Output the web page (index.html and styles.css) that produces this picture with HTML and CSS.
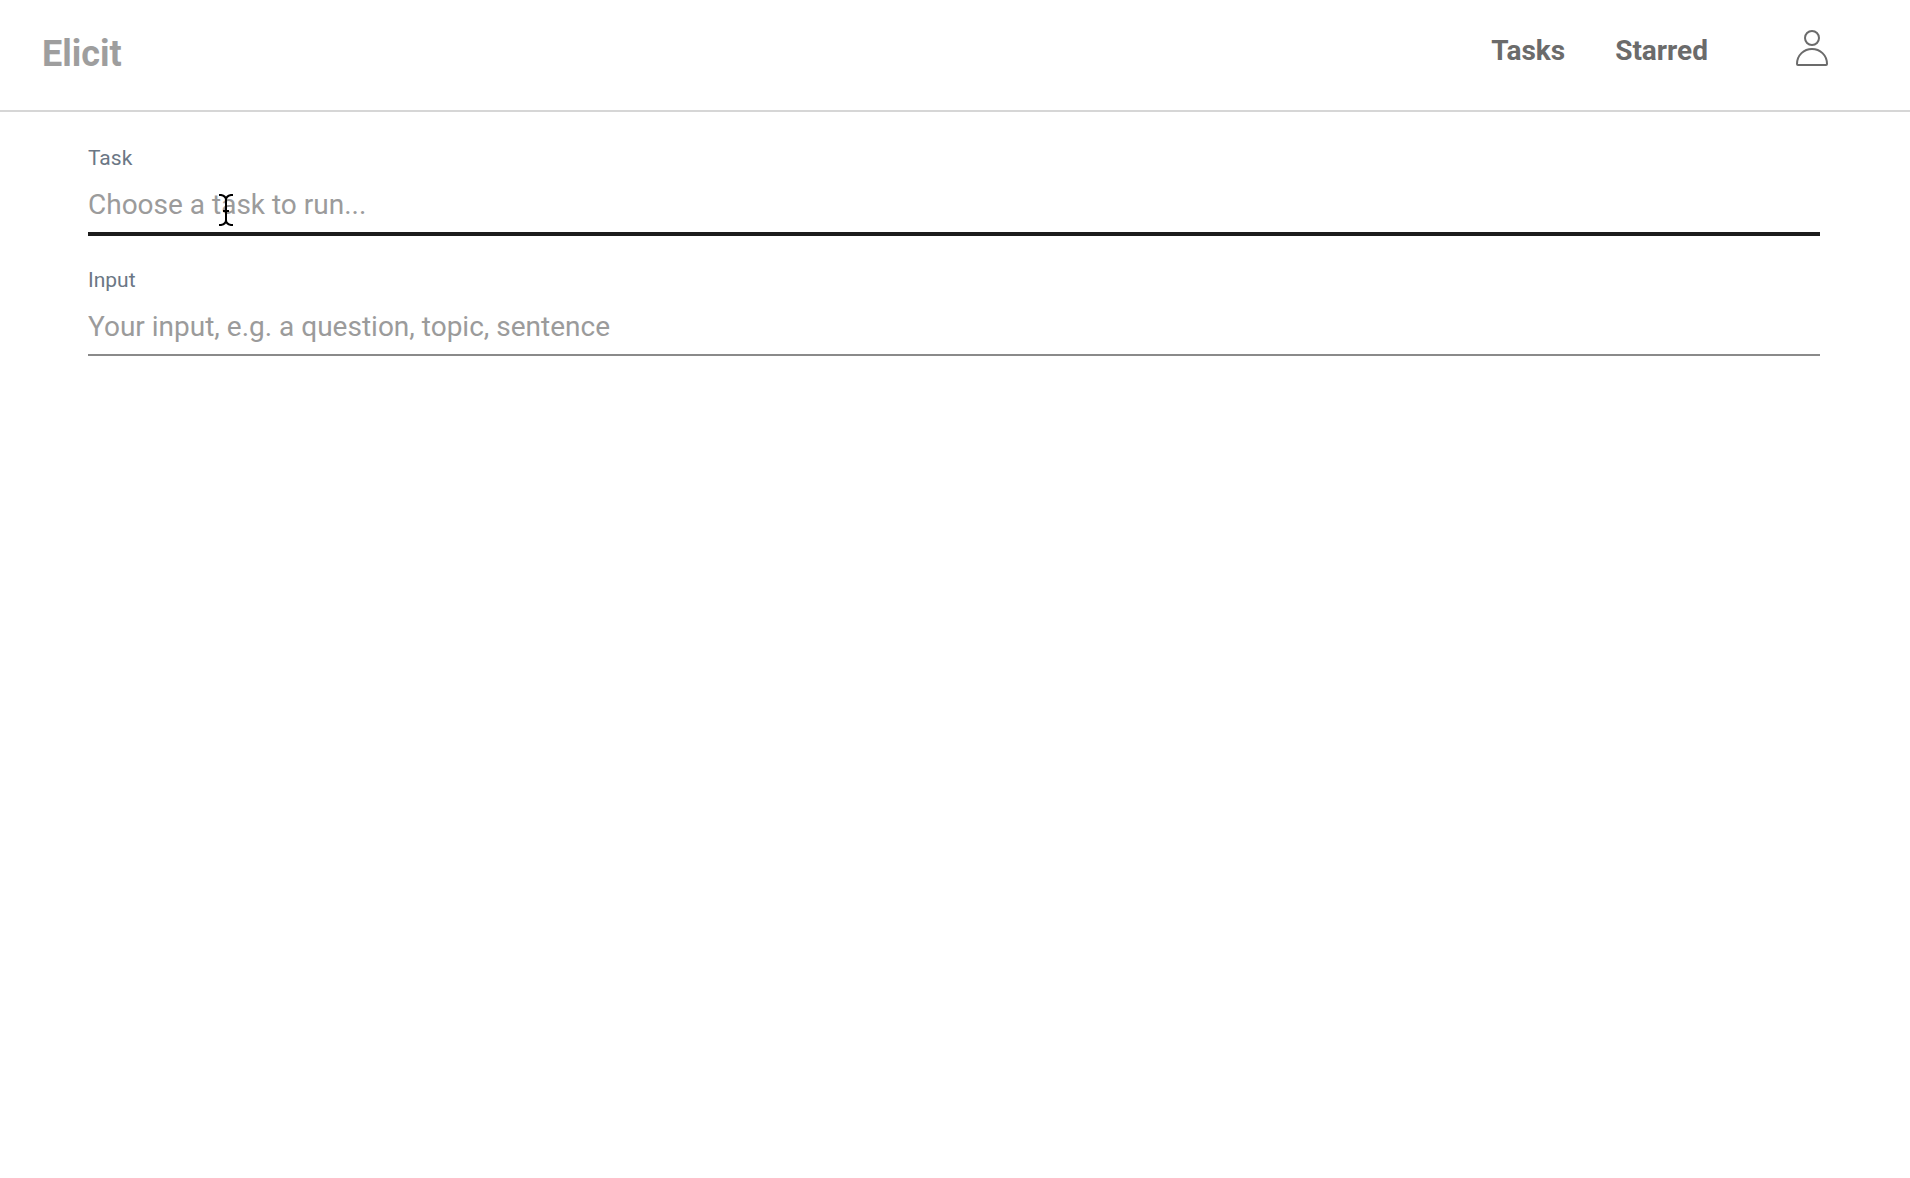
FILE: index.html
```html
<!DOCTYPE html>
<html lang="en">
<head>
<meta charset="utf-8">
<meta name="viewport" content="width=device-width, initial-scale=1">
<title>Elicit</title>
<link rel="stylesheet" href="styles.css">
</head>
<body>
<header class="header">
  <a class="brand" href="#">Elicit</a>
  <nav class="nav">
    <a class="nav-link" href="#tasks">Tasks</a>
    <a class="nav-link" href="#starred">Starred</a>
    <button class="account" type="button" aria-label="Account">
      <svg class="account-icon" viewBox="0 0 32 36" fill="none" stroke="currentColor" stroke-width="2" aria-hidden="true">
        <circle cx="16" cy="8" r="7"/>
        <path d="M2 35Q1 35 1 34C1 25 8 19 16 19S31 25 31 34Q31 35 30 35Z"/>
      </svg>
    </button>
  </nav>
</header>
<main>
  <form class="form">
    <div class="field">
      <label class="label" for="task">Task</label>
      <input class="input input-active" id="task" type="text" placeholder="Choose a task to run..." autocomplete="off">
      <svg class="cursor" viewBox="0 0 14 32" fill="none" stroke="#000" stroke-width="2" aria-hidden="true">
        <path d="M0 1H2Q7 2 7 6V26Q7 30 2 31H0M14 1H12Q7 2 7 6M7 26Q7 30 12 31H14M4 17H10"/>
      </svg>
    </div>
    <div class="field">
      <label class="label" for="input">Input</label>
      <input class="input" id="input" type="text" placeholder="Your input, e.g. a question, topic, sentence" autocomplete="off">
    </div>
  </form>
</main>
</body>
</html>
```
FILE: styles.css
```css
*, *::before, *::after {
  box-sizing: border-box;
}

body {
  margin: 0;
  background: #fff;
  font-family: Roboto, sans-serif;
}

.header {
  display: flex;
  justify-content: space-between;
  align-items: flex-start;
  padding: 30px 82px 32px 42px;
  border-bottom: 2px solid #d6d6d6;
}

.brand {
  color: #9e9e9e;
  font-size: 36px;
  font-weight: 700;
  line-height: 48px;
  text-decoration: none;
}

.nav {
  display: flex;
  align-items: flex-start;
  gap: 50px;
}

.nav-link {
  color: #6b6b6b;
  font-size: 28px;
  font-weight: 700;
  line-height: 42px;
  text-decoration: none;
}

.account {
  display: flex;
  margin-left: 38px;
  padding: 0;
  border: 0;
  background: none;
  color: #6b6b6b;
}

.account-icon {
  width: 32px;
  height: 36px;
}

.form {
  display: flex;
  flex-direction: column;
  gap: 32px;
  padding: 32px 90px 32px 88px;
}

.field {
  position: relative;
  display: flex;
  flex-direction: column;
}

.label {
  color: #6b7785;
  font-size: 21px;
  line-height: 28px;
}

.input {
  width: 100%;
  height: 62px;
  padding: 4px 0 0;
  border: 0;
  border-bottom: 2px solid #8a8a8a;
  border-radius: 0;
  outline: 0;
  background: none;
  color: #1c1c1c;
  font-family: inherit;
  font-size: 28px;
}

.input-active {
  height: 64px;
  margin-bottom: -2px;
  border-bottom: 4px solid #1c1c1c;
}

.input::placeholder {
  color: #9b9b9b;
  opacity: 1;
}

.cursor {
  position: absolute;
  top: 50px;
  left: 131px;
  width: 14px;
  height: 32px;
  pointer-events: none;
}
```
